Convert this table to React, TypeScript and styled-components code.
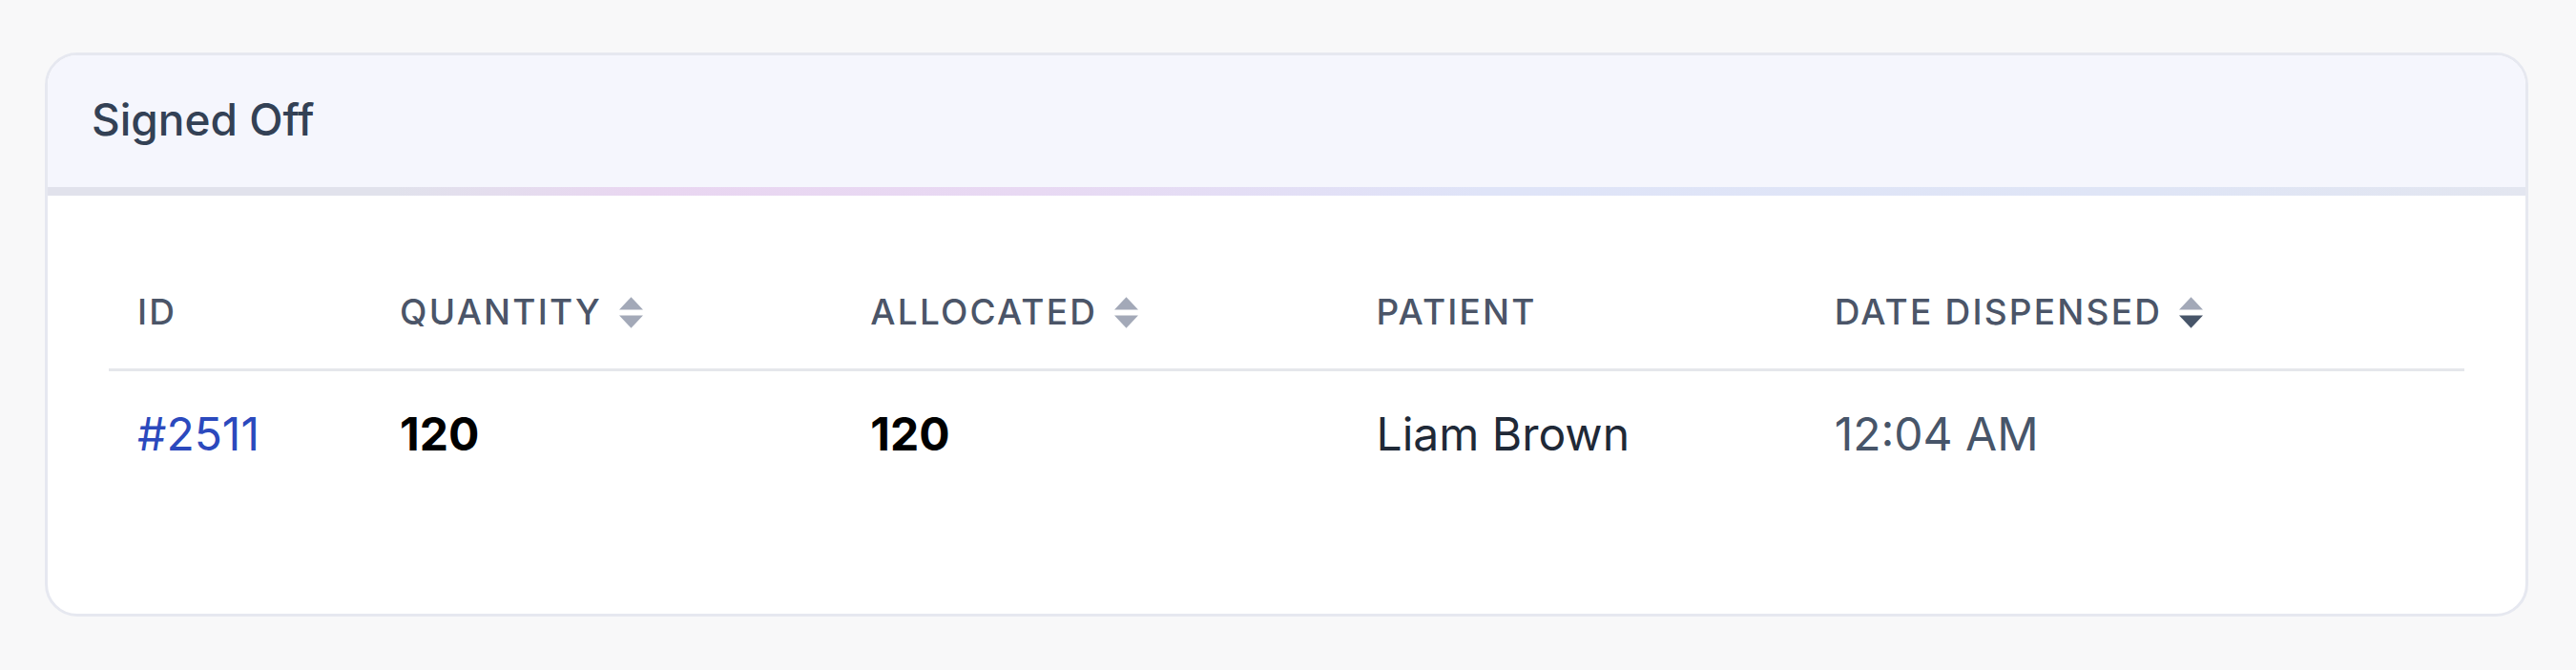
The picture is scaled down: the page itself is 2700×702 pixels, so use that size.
import styled, { createGlobalStyle } from 'styled-components'

const GlobalStyle = createGlobalStyle`
  html, body {
    margin: 0;
    padding: 0;
    background: #f8f8f9;
    font-family: Inter, "Noto Sans", "Liberation Sans", sans-serif;
  }
`

const Page = styled.main`
  padding: 55px 50px 56px 47px;
`

const Card = styled.section`
  background: #ffffff;
  border: 3px solid #e6e8f0;
  border-radius: 34px;
  overflow: hidden;
`

const CardHead = styled.header`
  background: #f5f6fd;
  padding: 43px 46px 47px;
  border-bottom: 9px solid transparent;
  border-image: linear-gradient(
      90deg,
      #e1e2ec 0%,
      #e1e2ec 14%,
      #e9d6f1 24%,
      #e8d9f3 40%,
      #dfe4f8 58%,
      #dfe5f6 85%,
      #e3e6f0 100%
    )
    1;
`

const Title = styled.h2`
  margin: 0;
  font-size: 46px;
  line-height: 48px;
  font-weight: 500;
  color: #334155;
`

const CardBody = styled.div`
  padding: 67px 64px 122px;
`

const Table = styled.table`
  width: 100%;
  border-collapse: collapse;
  table-layout: fixed;
`

const HeadCell = styled.th`
  padding: 31px 30px 35px;
  text-align: left;
  font-size: 37px;
  line-height: 48px;
  font-weight: 500;
  letter-spacing: 0.06em;
  text-transform: uppercase;
  color: #4b5568;
  border-bottom: 3px solid #e5e7eb;
  white-space: nowrap;
`

const HeadLabel = styled.span`
  display: inline-flex;
  align-items: center;
  gap: 18px;
`

const Cell = styled.td<{ tone?: 'link' | 'strong' | 'name' | 'muted' }>`
  padding: 42px 30px;
  font-size: 48px;
  line-height: 48px;
  white-space: nowrap;
  font-weight: ${(p) => (p.tone === 'strong' ? 700 : 400)};
  color: ${(p) =>
    p.tone === 'link'
      ? '#2b49bd'
      : p.tone === 'strong'
      ? '#000000'
      : p.tone === 'muted'
      ? '#475569'
      : '#1f2937'};
`

function SortIcon({ active }: { active?: 'desc' }) {
  return (
    <svg width="25" height="33" viewBox="0 0 26 34">
      <polygon points="13,0 26,14 0,14" fill="#a3a9b8" />
      <polygon
        points="0,20 26,20 13,34"
        fill={active === 'desc' ? '#475569' : '#a3a9b8'}
      />
    </svg>
  )
}

const columns = [
  { label: 'ID', width: 275 },
  { label: 'Quantity', width: 493, sort: true },
  { label: 'Allocated', width: 530, sort: true },
  { label: 'Patient', width: 480 },
  { label: 'Date Dispensed', width: 690, sort: true, active: 'desc' as const },
]

const rows = [
  { id: '#2511', quantity: 120, allocated: 120, patient: 'Liam Brown', date: '12:04 AM' },
]

export default function App() {
  return (
    <>
      <GlobalStyle />
      <Page>
        <Card>
          <CardHead>
            <Title>Signed Off</Title>
          </CardHead>
          <CardBody>
            <Table>
              <colgroup>
                {columns.map((c) => (
                  <col key={c.label} style={{ width: c.width }} />
                ))}
              </colgroup>
              <thead>
                <tr>
                  {columns.map((c) => (
                    <HeadCell key={c.label}>
                      <HeadLabel>
                        {c.label}
                        {c.sort && <SortIcon active={c.active} />}
                      </HeadLabel>
                    </HeadCell>
                  ))}
                </tr>
              </thead>
              <tbody>
                {rows.map((r) => (
                  <tr key={r.id}>
                    <Cell tone="link">{r.id}</Cell>
                    <Cell tone="strong">{r.quantity}</Cell>
                    <Cell tone="strong">{r.allocated}</Cell>
                    <Cell tone="name">{r.patient}</Cell>
                    <Cell tone="muted">{r.date}</Cell>
                  </tr>
                ))}
              </tbody>
            </Table>
          </CardBody>
        </Card>
      </Page>
    </>
  )
}
